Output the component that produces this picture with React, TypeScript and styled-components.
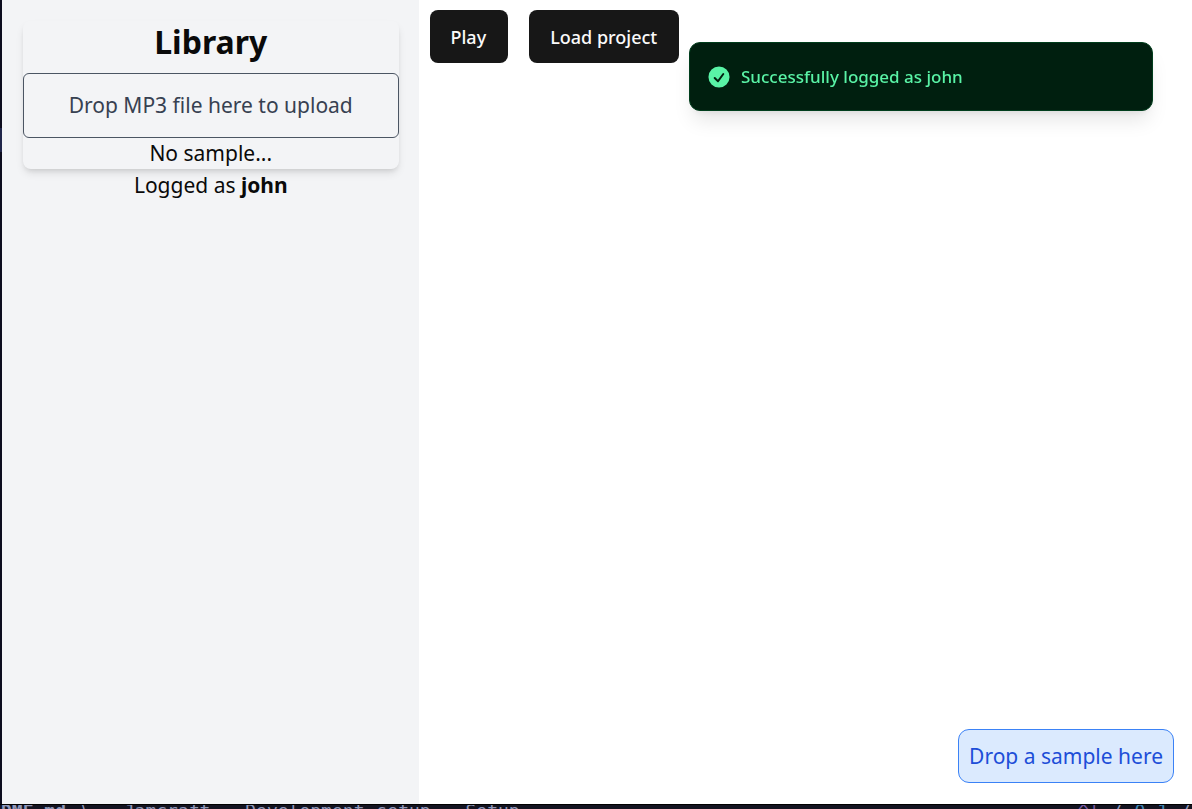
import React from "react";
import styled, { createGlobalStyle } from "styled-components";

const GlobalStyle = createGlobalStyle`
  *, *::before, *::after { box-sizing: border-box; }
  body {
    margin: 0;
    background: #ffffff;
    color: #0a0a0a;
    font-family: "Noto Sans", sans-serif;
    font-size: 21px;
    line-height: 31px;
  }
`;

const Screen = styled.div`
  display: flex;
  flex-direction: column;
  height: 100vh;
  overflow: hidden;
`;

const Workspace = styled.div`
  flex: 1;
  min-height: 0;
  display: flex;
  padding-left: 2px;
  background: linear-gradient(#0c0c1e 128px, #20264a 128px, #20264a 152px, #0c0c1e 152px);
`;

const Sidebar = styled.aside`
  flex: 0 0 35%;
  display: flex;
  flex-direction: column;
  gap: 1px;
  padding: 21px 20px 21px 21px;
  background: #f3f4f6;
  text-align: center;
`;

const LibraryCard = styled.section`
  border-radius: 8px;
  box-shadow: 0 5px 8px -1px rgba(0, 0, 0, 0.1), 0 3px 5px -2px rgba(0, 0, 0, 0.1);
`;

const Title = styled.h1`
  margin: 0;
  padding-bottom: 11px;
  font-size: 32px;
  line-height: 41px;
  font-weight: 700;
`;

const UploadZone = styled.div`
  padding: 16px;
  border: 1px solid #4b5563;
  border-radius: 6px;
  color: #374151;
`;

const Line = styled.p`
  margin: 0;
`;

const Main = styled.main`
  flex: 1;
  min-width: 0;
  display: flex;
  flex-direction: column;
  justify-content: space-between;
  padding: 10px 18px 21px 11px;
  background: #ffffff;
`;

const Toolbar = styled.div`
  display: flex;
  gap: 21px;
`;

const Button = styled.button`
  padding: 13px 22px 11px 21px;
  border: 0;
  border-radius: 8px;
  background: #171717;
  color: #fafafa;
  font: inherit;
  font-size: 18px;
  line-height: 29px;
  font-weight: 500;
  white-space: nowrap;
`;

const SampleZone = styled.div`
  align-self: flex-end;
  padding: 11px 10px 10px;
  border: 1px solid #3b82f6;
  border-radius: 11px;
  background: #dbeafe;
  color: #1d4ed8;
`;

const Toast = styled.div`
  position: fixed;
  top: 42px;
  right: 39px;
  width: 464px;
  display: flex;
  align-items: center;
  gap: 11px;
  padding: 20px 18px;
  border: 1px solid #003d1c;
  border-radius: 11px;
  background: #001f0f;
  color: #59f3a6;
  box-shadow: 0 13px 20px -4px rgba(0, 0, 0, 0.1), 0 5px 8px -5px rgba(0, 0, 0, 0.1);
  font-size: 17px;
  line-height: 27px;
  font-weight: 500;
`;

const StatusBar = styled.footer`
  flex: 0 0 5px;
  display: flex;
  justify-content: space-between;
  border-top: 1px solid #000000;
  background: #131320;
  overflow: hidden;
  color: #8e96b8;
  font-family: "DejaVu Sans Mono", monospace;
  font-size: 18px;
  line-height: 12px;
  white-space: pre;
`;

const StatusGroup = styled.div`
  display: flex;
  gap: 12px;
  padding: 0 1px;
`;

const StatusText = styled.span<{ $color?: string; $bold?: boolean }>`
  color: ${(p) => p.$color ?? "inherit"};
  font-weight: ${(p) => (p.$bold ? 700 : 400)};
`;

function SuccessIcon() {
  return (
    <svg width="22" height="22" viewBox="0 0 20 20" fill="currentColor" aria-hidden="true">
      <path
        fillRule="evenodd"
        clipRule="evenodd"
        d="M10 18a8 8 0 100-16 8 8 0 000 16zm3.857-9.809a.75.75 0 00-1.214-.882l-3.483 4.79-1.88-1.88a.75.75 0 10-1.06 1.061l2.5 2.5a.75.75 0 001.137-.089l4-5.5z"
        transform="translate(-2 -2) scale(1.2)"
      />
    </svg>
  );
}

export default function App() {
  return (
    <>
      <GlobalStyle />
      <Screen>
        <Workspace>
          <Sidebar>
            <LibraryCard>
              <Title>Library</Title>
              <UploadZone>Drop MP3 file here to upload</UploadZone>
              <Line>No sample...</Line>
            </LibraryCard>
            <Line>
              Logged as <b>john</b>
            </Line>
          </Sidebar>
          <Main>
            <Toolbar>
              <Button type="button">Play</Button>
              <Button type="button">Load project</Button>
            </Toolbar>
            <SampleZone>Drop a sample here</SampleZone>
          </Main>
        </Workspace>
        <StatusBar>
          <StatusGroup>
            <StatusText $bold>DME.md</StatusText>
            <StatusText>⟩</StatusText>
            <StatusText $color="#8a7f5c">·</StatusText>
            <StatusText>Jamcraft</StatusText>
            <StatusText $color="#8a7f5c">·</StatusText>
            <StatusText>Development</StatusText>
            <StatusText>setup</StatusText>
            <StatusText $color="#8a7f5c">·</StatusText>
            <StatusText>Setup</StatusText>
          </StatusGroup>
          <StatusGroup>
            <StatusText $color="#7a5ba6">^|</StatusText>
            <StatusText>/</StatusText>
            <StatusText $color="#3f86b5">0</StatusText>
            <StatusText $color="#3f86b5">1</StatusText>
            <StatusText>/</StatusText>
          </StatusGroup>
        </StatusBar>
      </Screen>
      <Toast role="status">
        <SuccessIcon />
        Successfully logged as john
      </Toast>
    </>
  );
}
